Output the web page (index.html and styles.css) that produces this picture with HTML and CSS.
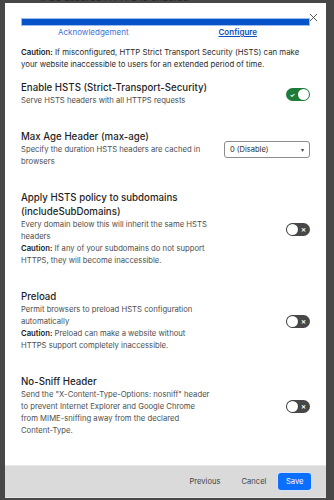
FILE: index.html
```html
<!DOCTYPE html>
<html>
<head>
    <title>HSTS</title>
    <link rel="stylesheet" href="styles.css">
</head>
<body>
    <!-- Página detrás del modal -->
    <div class="page-behind">
        <span>1. Be assured HTTPS is enabled</span>
    </div>

    <div class="modal">
        <div class="modal-body">
            <button class="modal-close" type="button" aria-label="Close">
                <svg viewBox="0 0 10 10" width="9" height="9"><path d="M1 1 L9 9 M9 1 L1 9" stroke="#555" stroke-width="1.1" fill="none"/></svg>
            </button>

            <!-- Progreso del asistente -->
            <div class="progress"><div class="progress-bar"></div></div>
            <div class="steps">
                <a href="#" class="step">Acknowledgement</a>
                <a href="#" class="step active">Configure</a>
            </div>

            <p class="caution"><b>Caution:</b> If misconfigured, HTTP Strict Transport Security (HSTS) can make your website inaccessible to users for an extended period of time.</p>

            <div class="setting">
                <div class="setting-text">
                    <h3>Enable HSTS (Strict-Transport-Security)</h3>
                    <p>Serve HSTS headers with all HTTPS requests</p>
                </div>
                <div class="setting-control">
                    <label class="toggle on">
                        <span class="toggle-mark">&#10003;</span>
                        <span class="toggle-knob"></span>
                    </label>
                </div>
            </div>

            <div class="setting">
                <div class="setting-text">
                    <h3>Max Age Header (max-age)</h3>
                    <p>Specify the duration HSTS headers are cached in<br>browsers</p>
                </div>
                <div class="setting-control">
                    <div class="select">
                        <span>0 (Disable)</span>
                        <span class="caret">&#9662;</span>
                    </div>
                </div>
            </div>

            <div class="setting">
                <div class="setting-text">
                    <h3>Apply HSTS policy to subdomains<br>(includeSubDomains)</h3>
                    <p>Every domain below this will inherit the same HSTS<br>headers</p>
                    <p><b>Caution:</b> If any of your subdomains do not support<br>HTTPS, they will become inaccessible.</p>
                </div>
                <div class="setting-control">
                    <label class="toggle">
                        <span class="toggle-knob"></span>
                        <span class="toggle-mark">&#10005;</span>
                    </label>
                </div>
            </div>

            <div class="setting">
                <div class="setting-text">
                    <h3>Preload</h3>
                    <p>Permit browsers to preload HSTS configuration<br>automatically</p>
                    <p><b>Caution:</b> Preload can make a website without<br>HTTPS support completely inaccessible.</p>
                </div>
                <div class="setting-control">
                    <label class="toggle">
                        <span class="toggle-knob"></span>
                        <span class="toggle-mark">&#10005;</span>
                    </label>
                </div>
            </div>

            <div class="setting">
                <div class="setting-text">
                    <h3>No-Sniff Header</h3>
                    <p>Send the "X-Content-Type-Options: nosniff" header<br>to prevent Internet Explorer and Google Chrome<br>from MIME-sniffing away from the declared<br>Content-Type.</p>
                </div>
                <div class="setting-control">
                    <label class="toggle">
                        <span class="toggle-knob"></span>
                        <span class="toggle-mark">&#10005;</span>
                    </label>
                </div>
            </div>
        </div>

        <div class="modal-footer">
            <button type="button" class="btn btn-link">Previous</button>
            <button type="button" class="btn btn-link">Cancel</button>
            <button type="button" class="btn btn-primary">Save</button>
        </div>
    </div>
</body>
</html>
```

FILE: styles.css
```css
/* Estilos generales */
:root {
    --fondo: #474747;
    --texto: #1f1f1f;
    --texto-suave: #4d4d4d;
    --azul: #0552c9;
    --azul-link: #3b74d9;
    --azul-activo: #0d4fb8;
    --verde: #1e7b3a;
    --gris-toggle: #474747;
    --gris-footer: #dadada;
}

* {
    margin: 0;
    padding: 0;
    box-sizing: border-box;
}

body {
    background: var(--fondo);
    font-family: Inter, 'Liberation Sans', Arial, sans-serif;
    color: var(--texto);
    padding: 0 8px 3px 5px;
}

/* Página detrás (solo asoma arriba) */
.page-behind {
    height: 3px;
    overflow: hidden;
    padding-left: 34px;
}

.page-behind span {
    display: block;
    margin-top: -8px;
    font-size: 10px;
    line-height: 10px;
    color: #262626;
}

/* Modal */
.modal {
    background: #fff;
    position: relative;
}

.modal-body {
    padding: 15px 16px 28px;
}

.modal-close {
    position: absolute;
    top: 10px;
    right: 8px;
    border: none;
    background: none;
    display: flex;
}

/* Progreso */
.progress {
    height: 8px;
    background: var(--azul);
    box-shadow: inset 0 0 0 1px #9cbbee;
}

.progress-bar {
    height: 100%;
}

.steps {
    display: grid;
    grid-template-columns: 1fr 1fr;
    text-align: center;
    font-size: 8px;
    line-height: 12px;
}

.step {
    color: var(--azul-link);
    text-decoration: none;
}

.step.active {
    color: var(--azul-activo);
    font-weight: 600;
    text-decoration: underline;
}

.caution {
    margin-top: 8px;
    font-size: 7.8px;
    line-height: 12px;
    color: #2b2b2b;
}

.caution b,
.setting p b {
    font-weight: 600;
    color: #222;
}

/* Opciones */
.setting {
    display: grid;
    grid-template-columns: 200px 1fr;
    align-items: center;
    margin-top: 23px;
}

.caution + .setting {
    margin-top: 11px;
}

.setting h3 {
    font-size: 9.7px;
    line-height: 14px;
    font-weight: 500;
    color: var(--texto);
}

.setting p {
    font-size: 7.7px;
    line-height: 12px;
    color: var(--texto-suave);
}

.setting-control {
    display: flex;
    justify-content: flex-end;
}

/* Toggle */
.toggle {
    width: 24px;
    height: 13px;
    border-radius: 7px;
    background: var(--gris-toggle);
    display: flex;
    align-items: center;
    justify-content: space-between;
    padding: 1px;
}

.toggle.on {
    background: var(--verde);
}

.toggle-knob {
    width: 11px;
    height: 11px;
    border-radius: 50%;
    background: #fff;
    box-shadow: 0 0 0 0.5px #333;
}

.toggle.on .toggle-knob {
    box-shadow: none;
}

.toggle-mark {
    width: 11px;
    text-align: center;
    color: #fff;
    font-size: 6px;
    line-height: 11px;
    font-weight: bold;
}

/* Select */
.select {
    width: 86px;
    height: 17px;
    border: 1px solid #8c8c8c;
    border-radius: 3px;
    display: flex;
    align-items: center;
    justify-content: space-between;
    padding: 0 5px;
    font-size: 7.5px;
    color: #2b2b2b;
}

.caret {
    font-size: 6px;
    color: #444;
}

/* Pie */
.modal-footer {
    background: var(--gris-footer);
    border-top: 1px solid #e8e8e8;
    border-bottom: 1px solid #e6e6e6;
    height: 33px;
    display: flex;
    justify-content: flex-end;
    align-items: center;
    gap: 3px;
    padding: 0 15px;
}

.btn {
    font-family: inherit;
    font-size: 7.6px;
    height: 17px;
    border: none;
    border-radius: 3px;
    background: none;
    cursor: pointer;
}

.btn-link {
    color: #444;
    padding: 0 9px;
}

.btn-primary {
    background: #0b6efd;
    color: #fff;
    padding: 0 7.5px;
    box-shadow: 0 0 0 1px #d0e0ff;
}
```
